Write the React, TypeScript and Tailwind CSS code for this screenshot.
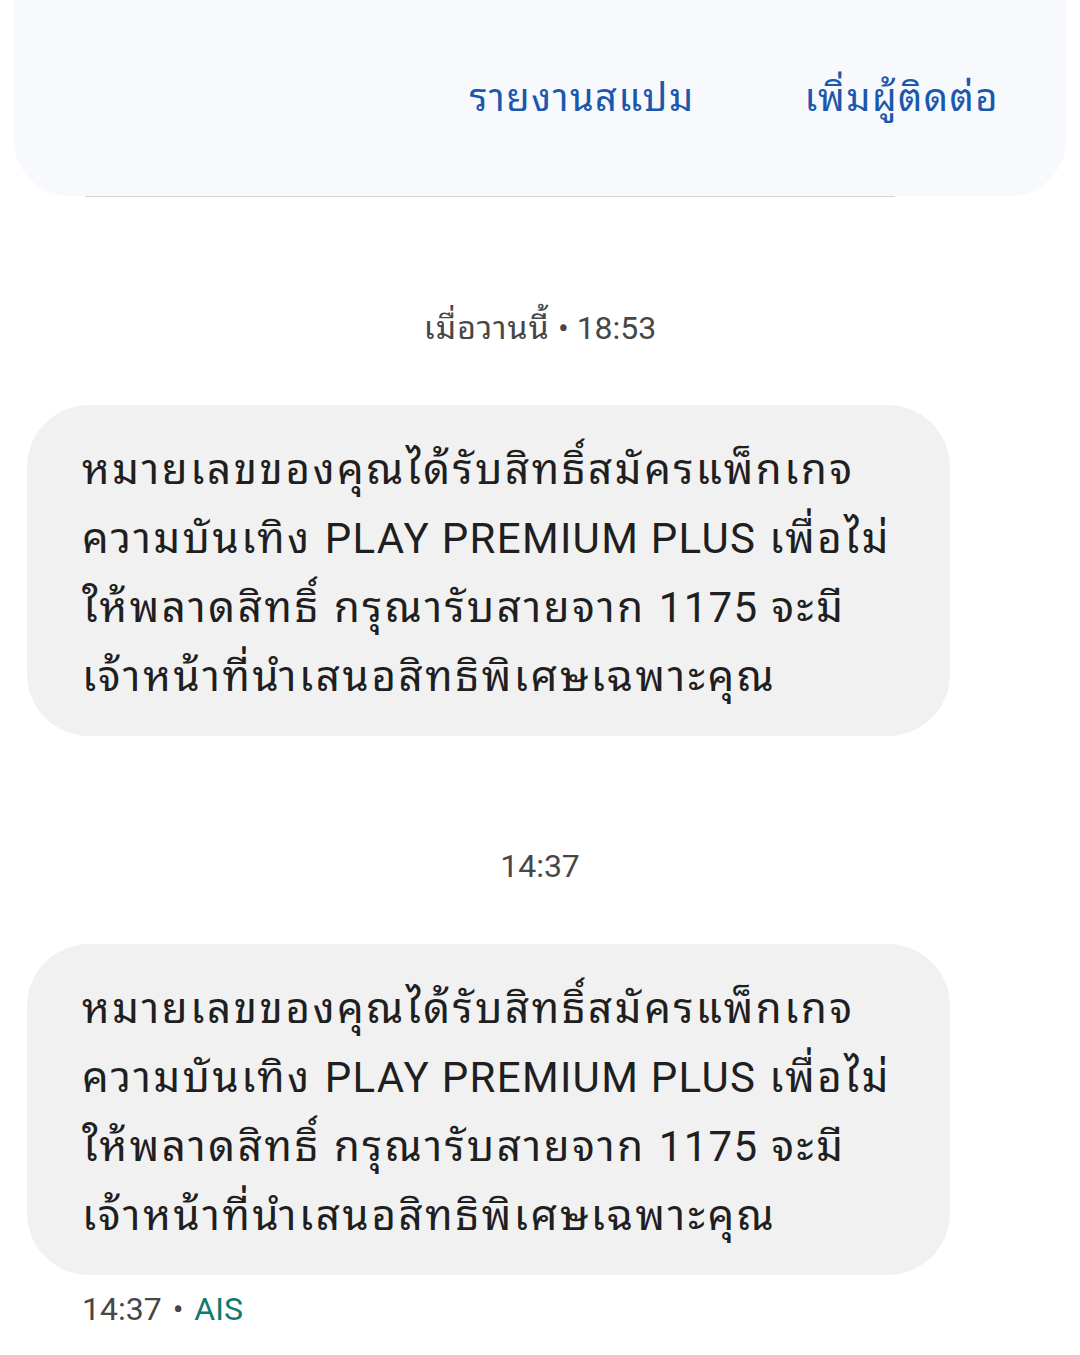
import React from "react";

const font = { fontFamily: "Roboto, 'Noto Sans Thai Looped', 'Noto Sans Thai', sans-serif" };

function Bubble() {
  return (
    <div className="mx-[27px] w-[923px] rounded-[62px] bg-[#f1f1f1] pl-[55px] pr-[30px] pt-[30px] pb-[25px]">
      <p className="text-[42px] leading-[69px] tracking-[2.6px] text-[#1f1f1f] whitespace-nowrap">
        หมายเลขของคุณได้รับสิทธิ์สมัครแพ็กเกจ
        <br />
        ความบันเทิง <span className="tracking-[1.3px]">PLAY PREMIUM PLUS</span> เพื่อไม่
        <br />
        ให้พลาดสิทธิ์ กรุณารับสายจาก <span className="tracking-[1.3px]">1175</span> จะมี
        <br />
        เจ้าหน้าที่นำเสนอสิทธิพิเศษเฉพาะคุณ
      </p>
    </div>
  );
}

export default function App() {
  return (
    <div className="w-[1080px] h-[1355px] bg-white overflow-hidden" style={font}>
      <div className="mx-[14px] h-[196px] rounded-b-[56px] bg-[#f7f9fc] flex items-center justify-end pr-[67px] gap-[110px]">
        <span className="text-[38px] tracking-[1.5px] text-[#1b58ad]">รายงานสแปม</span>
        <span className="text-[38px] tracking-[1.5px] text-[#1b58ad]">เพิ่มผู้ติดต่อ</span>
      </div>
      <div className="mx-[85px] w-[810px] h-px bg-[#d6d6d6]" />
      <div className="mt-[111px] text-center text-[32px] leading-[40px] text-[#474747]">
        <span className="tracking-[1.2px]">เมื่อวานนี้</span> • 18:53
      </div>
      <div className="mt-[57px]">
        <Bubble />
      </div>
      <div className="mt-[110px] text-center text-[32px] leading-[40px] text-[#474747]">14:37</div>
      <div className="mt-[58px]">
        <Bubble />
      </div>
      <div className="mt-[14px] pl-[82px] text-[32px] leading-[40px] text-[#474747]">
        14:37<span className="px-[3px]"> • </span><span className="text-[#0f7a6f]">AIS</span>
      </div>
    </div>
  );
}
